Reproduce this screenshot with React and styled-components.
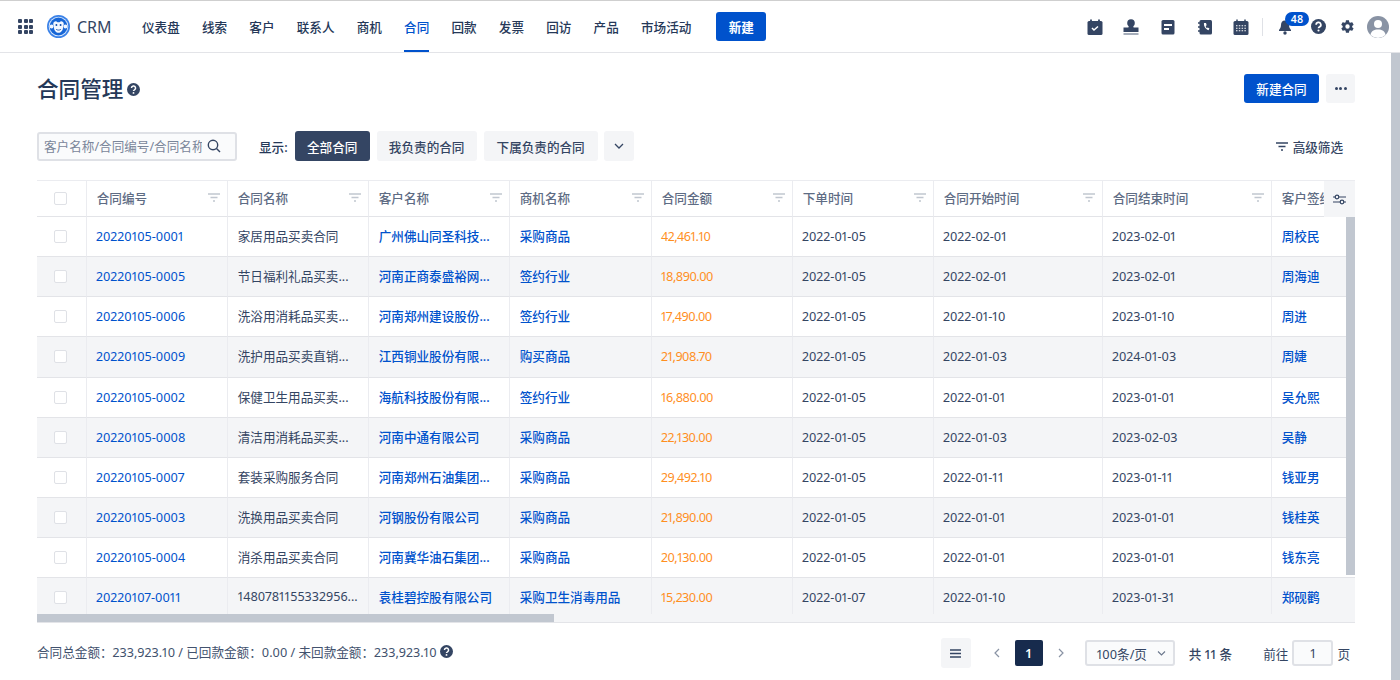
import React from 'react';
import styled, { createGlobalStyle } from 'styled-components';

const FONT = '"Noto Sans", "Noto Sans CJK SC", sans-serif';

const Global = createGlobalStyle`
  html, body { margin: 0; padding: 0; height: 100%; background: #fff; overflow: hidden; }
  body { font-family: ${FONT}; color: #172b4d; font-variant-numeric: proportional-nums; font-feature-settings: "pnum" 1; }
  button { font-feature-settings: "pnum" 1; }
  * { box-sizing: border-box; }
`;

const Shell = styled.div`height: 680px; width: 1400px; display: flex; flex-direction: column; border-top: 1px solid #cfcfcf;`;
const TopBar = styled.header`height: 52px; flex: none; display: flex; align-items: center; padding-left: 18px; padding-right: 11px; border-bottom: 1px solid #e3e4e8; background: #fff;`;
const Apps = styled.div`display: grid; grid-template-columns: repeat(3, 4px); gap: 1.5px; width: 16px; margin-right: 13px;
  i { width: 4px; height: 4px; background: #344563; border-radius: 1px; display: block; }`;
const Brand = styled.div`display: flex; align-items: center; gap: 7px; font-size: 16px; color: #344563; width: 95px;`;
const Nav = styled.nav`display: flex; align-items: stretch; height: 51px; gap: 22.2px;`;
const NavItem = styled.a`display: flex; align-items: center; font-size: 12.6px; font-weight: 500; color: ${p => p.$active ? '#0052cc' : '#253858'}; border-bottom: 2px solid ${p => p.$active ? '#0052cc' : 'transparent'}; padding-top: 2px;`;
const NewBtn = styled.button`border: 0; background: #0052cc; color: #fff; border-radius: 3px; font: 600 12.6px ${FONT}; height: 29px; width: 50px; margin-left: 25px; align-self: center; padding: 0;`;
const Tools = styled.div`margin-left: auto; display: flex; align-items: center;`;
const ToolIcon = styled.span`display: flex; width: 16px; height: 18px; align-items: center; justify-content: center; margin-right: ${p => p.$gap ?? 20}px; position: relative;`;
const Sep = styled.span`width: 1.500px; height: 18px; background: #dfe1e6; margin-right: 14px;`;
const Badge = styled.span`position: absolute; left: 8px; top: -6px; background: #0052cc; color: #fff; font-size: 10.500px; font-weight: 600; height: 14px; line-height: 14px; border-radius: 8px; width: 24px; text-align: center;`;

const Body = styled.div`flex: 1; display: flex; min-height: 0;`;
const Main = styled.main`flex: 1; padding: 20px 36px 0 37px; min-width: 0;`;
const PageScroll = styled.div`width: 9px; background: #c1c7d0;`;
const TitleRow = styled.div`display: flex; align-items: center; height: 32px;`;
const Title = styled.h1`margin: 0; font-size: 21.600px; font-weight: 500; color: #253858; margin-right: 4px; line-height: 32px;`;
const Right = styled.div`margin-left: auto; display: flex; gap: 7px; align-items: center; margin-top: -1px;`;
const Primary = styled.button`border: 0; width: 75px; height: 29px; background: #0052cc; color: #fff; border-radius: 3px; font: 500 12.6px ${FONT}; padding: 0;`;
const More = styled.button`border: 0; width: 29px; height: 29px; background: #f4f5f7; border-radius: 3px; display: flex; align-items: center; justify-content: center; gap: 1.500px; padding: 0;
  i { width: 3px; height: 3px; border-radius: 50%; background: #344563; display: block; }`;

const FilterRow = styled.div`display: flex; align-items: center; height: 30px; margin-top: 26px;`;
const Search = styled.div`width: 200px; height: 29px; background: #fafbfc; border: 2px solid #dfe1e6; border-radius: 3px; display: flex; align-items: center; padding: 0 14px 0 5px; margin-right: 22px; justify-content: space-between;`;
const SearchText = styled.span`font-size: 12.6px; color: #7a869a; width: 158px; overflow: hidden; white-space: nowrap; margin-bottom: 2px;`;
const ShowLabel = styled.span`font-size: 12.6px; font-weight: 500; color: #253858; margin-right: 7px;`;
const Seg = styled.button`border: 0; height: 30px; width: ${p => p.$w}px; margin-right: ${p => p.$mr ?? 7}px; border-radius: 3px; background: ${p => p.$on ? '#344563' : '#f4f5f7'}; color: ${p => p.$on ? '#fff' : '#344563'}; font: 500 12.6px ${FONT}; padding: 0; display: flex; align-items: center; justify-content: center;`;
const Advanced = styled.div`margin-left: auto; display: flex; align-items: center; gap: 5px; font-size: 12.6px; font-weight: 500; color: #344563; margin-right: 12px;`;

const TableWrap = styled.div`position: relative; margin-top: 19px; height: 443px; overflow: hidden; border-top: 1px solid #ebecf0; border-bottom: 1px solid #e3e4e8;`;
const Grid = styled.div`display: grid; grid-template-columns: 50px 141px 141px 141px 142px 141px 141px 169px 169px 120px; grid-template-rows: 36px repeat(10, 40.15px);`;
const Row = styled.div`display: contents;`;
const Cell = styled.div`
  border-right: 1.500px solid #ebecf0; border-bottom: 1.200px solid #e3e4e8;
  background: ${p => p.$alt ? '#f4f5f7' : '#fff'};
  display: flex; align-items: center; padding-left: ${p => p.$lift ? 9.7 : 9}px; padding-bottom: ${p => p.$lift ? 2 : 0}px; font-size: 12.6px; white-space: nowrap; overflow: hidden;
  letter-spacing: ${p => p.$tone === 'money' ? '-0.5px' : 'normal'};
  color: ${p => p.$tone === 'link' || p.$tone === 'num' ? '#0052cc' : p.$tone === 'money' ? '#ff8f1f' : '#344563'};
  font-weight: ${p => p.$tone === 'link' ? 500 : 400};
`;
const Head = styled.div`border-right: 1.500px solid #ebecf0; border-bottom: 1.500px solid #e3e4e8; background: #fff; display: flex; align-items: center; justify-content: space-between; padding: 0 7px 2px 9.7px; font-size: 12.6px; color: #5e6c84; font-weight: 500; white-space: nowrap; overflow: hidden;`;
const CheckCell = styled(Cell)`justify-content: center; padding: 0 3px 0 0;`;
const CheckHead = styled(Head)`justify-content: center; padding: 0 3px 0 0;`;
const Check = styled.span`width: 13px; height: 13px; border: 1.500px solid #dfe1e6; border-radius: 2px; background: #fff; display: block;`;
const SettingsBtn = styled.div`position: absolute; right: 0; top: 0; width: 31px; height: 36px; background: #f4f5f7; display: flex; align-items: center; justify-content: center;`;
const VBar = styled.div`position: absolute; right: 0; top: 36px; width: 9px; height: 358px; background: #c1c7d0;`;
const HBar = styled.div`position: absolute; left: 0; bottom: 0; width: 100%; height: 8px; background: #f4f5f7;`;
const HThumb = styled.div`width: 517px; height: 8px; background: #c1c7d0;`;

const Footer = styled.div`display: flex; align-items: center; height: 30px; margin-top: 15px;`;
const Sum = styled.div`font-size: 12.6px; color: #42526e; display: flex; align-items: center; gap: 3px; margin-bottom: 3px;`;
const Pager = styled.div`margin-left: auto; display: flex; align-items: center; font-size: 12.6px; color: #344563; padding-right: 5px;`;
const ListBtn = styled.div`width: 30px; height: 30px; background: #f4f5f7; border-radius: 3px; display: flex; align-items: center; justify-content: center; margin-right: 19px;`;
const Arrow = styled.span`display: flex; width: 14px; justify-content: center; margin-right: ${p => p.$mr}px;`;
const PageNum = styled.span`width: 28px; height: 26px; background: #172b4d; color: #fff; font-weight: 600; display: flex; align-items: center; justify-content: center; border-radius: 2px; margin-right: 11px;`;
const PerPage = styled.div`width: 90px; height: 26px; background: #fafbfc; border: 2px solid #dfe1e6; border-radius: 3px; display: flex; align-items: center; justify-content: space-between; padding: 0 7px 0 10px; margin-right: 14px;`;
const Total = styled.span`margin-right: 31px; font-weight: 500;`;
const Jump = styled.div`width: 41px; height: 26px; background: #fafbfc; border: 2px solid #dfe1e6; border-radius: 3px; display: flex; align-items: center; justify-content: center; margin: 0 4px;`;

const Ico = ({ children, w = 16, h = 16 }) => <svg width={w} height={h} viewBox={`0 0 ${w} ${h}`} fill="none">{children}</svg>;
const Help = ({ s = 14 }) => (
  <svg width={s} height={s} viewBox="0 0 14 14"><circle cx="7" cy="7" r="7" fill="#344563" />
    <path d="M4.800 5.400a2.200 2.200 0 1 1 3.300 1.900c-.7.4-1.100.7-1.100 1.400" stroke="#fff" strokeWidth="1.600" fill="none" /><circle cx="7" cy="10.700" r="1" fill="#fff" /></svg>
);
const FilterIco = ({ c = '#c1c7d0' }) => (
  <Ico w={12} h={9}><path d="M0 1h12M2.500 4.500h7M5 8h2" stroke={c} strokeWidth="1.400" /></Ico>
);

const Logo = () => (
  <svg width="23" height="23" viewBox="0 0 24 24">
    <circle cx="12" cy="12" r="12" fill="#3b82e8" />
    <circle cx="12" cy="12" r="10.200" fill="#dbe9fb" />
    <circle cx="12" cy="12" r="9.300" fill="#1766d6" />
    <circle cx="4.800" cy="12" r="2" fill="#f2f7ff" /><circle cx="19.200" cy="12" r="2" fill="#f2f7ff" />
    <path d="M6.500 9.500C6.500 7 9 6 10.200 7c.9.700 2.700.7 3.600 0C15 6 17.500 7 17.500 9.500c0 1.500-.8 2.300-.8 3.700 0 2.900-2.300 5.300-4.700 5.300s-4.700-2.400-4.700-5.300c0-1.400-.8-2.200-.8-3.700z" fill="#f2f7ff" />
    <circle cx="9.800" cy="10.500" r="1" fill="#0f4aa8" /><circle cx="14.200" cy="10.500" r="1" fill="#0f4aa8" />
    <path d="M9.600 15c1.400 1 3.400 1 4.800 0" stroke="#0f4aa8" strokeWidth=".9" fill="none" />
  </svg>
);

const C = '#344563';
const navItems = ['仪表盘', '线索', '客户', '联系人', '商机', '合同', '回款', '发票', '回访', '产品', '市场活动'];
const headers = ['合同编号', '合同名称', '客户名称', '商机名称', '合同金额', '下单时间', '合同开始时间', '合同结束时间'];
const rows = [
  ['20220105-0001', '家居用品买卖合同', '广州佛山同圣科技...', '采购商品', '42,461.10', '2022-01-05', '2022-02-01', '2023-02-01', '周校民'],
  ['20220105-0005', '节日福利礼品买卖...', '河南正商泰盛裕网...', '签约行业', '18,890.00', '2022-01-05', '2022-02-01', '2023-02-01', '周海迪'],
  ['20220105-0006', '洗浴用消耗品买卖...', '河南郑州建设股份...', '签约行业', '17,490.00', '2022-01-05', '2022-01-10', '2023-01-10', '周进'],
  ['20220105-0009', '洗护用品买卖直销...', '江西铜业股份有限...', '购买商品', '21,908.70', '2022-01-05', '2022-01-03', '2024-01-03', '周婕'],
  ['20220105-0002', '保健卫生用品买卖...', '海航科技股份有限...', '签约行业', '16,880.00', '2022-01-05', '2022-01-01', '2023-01-01', '吴允熙'],
  ['20220105-0008', '清洁用消耗品买卖...', '河南中通有限公司', '采购商品', '22,130.00', '2022-01-05', '2022-01-03', '2023-02-03', '吴静'],
  ['20220105-0007', '套装采购服务合同', '河南郑州石油集团...', '采购商品', '29,492.10', '2022-01-05', '2022-01-11', '2023-01-11', '钱亚男'],
  ['20220105-0003', '洗换用品买卖合同', '河钢股份有限公司', '采购商品', '21,890.00', '2022-01-05', '2022-01-01', '2023-01-01', '钱桂英'],
  ['20220105-0004', '消杀用品买卖合同', '河南冀华油石集团...', '采购商品', '20,130.00', '2022-01-05', '2022-01-01', '2023-01-01', '钱东亮'],
  ['20220107-0011', '1480781155332956...', '袁桂碧控股有限公司', '采购卫生消毒用品', '15,230.00', '2022-01-07', '2022-01-10', '2023-01-31', '郑砚鹳'],
];
const tones = ['num', '', 'link', 'link', 'money', '', '', '', 'link'];
const lifted = [false, true, true, true, false, false, false, false, true];

export default function App() {
  return (
    <Shell>
      <Global />
      <TopBar>
        <Apps>{Array.from({ length: 9 }).map((_, i) => <i key={i} />)}</Apps>
        <Brand><Logo />CRM</Brand>
        <Nav>{navItems.map(n => <NavItem key={n} $active={n === '合同'}>{n}</NavItem>)}</Nav>
        <NewBtn>新建</NewBtn>
        <Tools>
          <ToolIcon $gap={20}><Ico><rect x="0.500" y="2" width="15" height="14" rx="1.500" fill={C} /><path d="M4 0.500v3M12 0.500v3" stroke={C} strokeWidth="1.800" /><path d="M5 9l2 2 4-3.500" stroke="#fff" strokeWidth="1.500" /></Ico></ToolIcon>
          <ToolIcon $gap={21}><Ico><circle cx="8" cy="4" r="3.800" fill={C} /><path d="M6 6h4l.6 2.500h4.900V13H.5V8.500h4.900z" fill={C} /><rect x="0.500" y="14" width="15" height="2" fill="#a5adba" /></Ico></ToolIcon>
          <ToolIcon $gap={20.5}><Ico w={14}><rect x="0.500" y="1" width="13" height="14.500" rx="1.500" fill={C} /><path d="M3 6h8M3 10h5" stroke="#fff" strokeWidth="1.800" /></Ico></ToolIcon>
          <ToolIcon $gap={20.5}><Ico w={14}><rect x="1.500" y="1" width="12.500" height="14.500" rx="1.500" fill={C} /><path d="M0 4h3M0 8h3M0 12h3" stroke={C} strokeWidth="1.300" /><path d="M6 4c-.5 3 1.500 6 4.500 7.200l1-1.800-1.800-1-.8.8c-.7-.6-1.100-1.400-1.200-2.300l1-.6-.7-2.300z" fill="#fff" /></Ico></ToolIcon>
          <ToolIcon $gap={12.5}><Ico><rect x="0.500" y="2" width="15" height="14" rx="1.500" fill={C} /><path d="M4 0.500v3M12 0.500v3" stroke={C} strokeWidth="1.500" /><path d="M3 6.800h10M3 9.300h10M3 11.800h10" stroke="#fff" strokeWidth="1.100" strokeDasharray="1.500 1.300" /></Ico></ToolIcon>
          <Sep />
          <ToolIcon $gap={17}><Ico w={14}><path d="M7 1.500c-2.700 0-4 2-4 4.500 0 3-1.500 4-2 5v1h12v-1c-.5-1-2-2-2-5 0-2.500-1.300-4.500-4-4.500z" fill={C} /><circle cx="7" cy="14" r="1.700" fill={C} /></Ico><Badge>48</Badge></ToolIcon>
          <ToolIcon $gap={13}><Help s={15} /></ToolIcon>
          <ToolIcon $gap={12}><svg width="15" height="15" viewBox="0 0 24 24"><path fill={C} d="M19.400 13c.1-.3.100-.7.100-1s0-.7-.1-1l2.100-1.600c.2-.2.300-.4.100-.7l-2-3.400c-.1-.2-.4-.3-.6-.2l-2.500 1c-.5-.4-1.100-.7-1.700-1l-.4-2.700c0-.2-.2-.4-.5-.4h-4c-.3 0-.5.200-.5.400L9 5.100c-.6.300-1.200.6-1.700 1l-2.500-1c-.2-.1-.5 0-.6.200l-2 3.400c-.2.300-.1.500.1.700L4.400 11c-.1.300-.1.700-.1 1s0 .7.100 1l-2.100 1.600c-.2.200-.3.400-.1.700l2 3.400c.1.200.4.300.6.200l2.500-1c.5.400 1.100.7 1.700 1l.4 2.700c0 .2.200.4.500.4h4c.3 0 .5-.2.500-.4l.4-2.700c.6-.3 1.200-.6 1.700-1l2.500 1c.2.100.5 0 .6-.2l2-3.400c.2-.3.100-.5-.1-.7zM12 15.500a3.500 3.500 0 1 1 0-7 3.500 3.500 0 0 1 0 7z" /></svg></ToolIcon>
          <svg width="22" height="22" viewBox="0 0 22 22"><circle cx="11" cy="11" r="11" fill="#8993a4" /><circle cx="11" cy="8" r="4" fill="#fff" /><path d="M3.500 19c.5-4 3.500-5.500 7.500-5.500s7 1.500 7.500 5.500A11 11 0 0 1 3.500 19z" fill="#fff" /></svg>
        </Tools>
      </TopBar>
      <Body>
        <Main>
          <TitleRow>
            <Title>合同管理</Title>
            <Help s={13} />
            <Right>
              <Primary>新建合同</Primary>
              <More><i /><i /><i /></More>
            </Right>
          </TitleRow>
          <FilterRow>
            <Search>
              <SearchText>客户名称/合同编号/合同名称</SearchText>
              <Ico w={14} h={14}><circle cx="6" cy="6" r="4.700" stroke={C} strokeWidth="1.400" /><path d="M9.500 9.500L13 13" stroke={C} strokeWidth="1.400" /></Ico>
            </Search>
            <ShowLabel>显示:</ShowLabel>
            <Seg $on $w={75}>全部合同</Seg>
            <Seg $w={100}>我负责的合同</Seg>
            <Seg $w={114} $mr={6}>下属负责的合同</Seg>
            <Seg $w={30}><Ico w={10} h={6}><path d="M1 1l4 4 4-4" stroke={C} strokeWidth="1.300" /></Ico></Seg>
            <Advanced><FilterIco c={C} />高级筛选</Advanced>
          </FilterRow>
          <TableWrap>
            <Grid>
              <CheckHead><Check /></CheckHead>
              {headers.map(h => <Head key={h}>{h}<FilterIco /></Head>)}
              <Head>客户签约</Head>
              {rows.map((r, i) => (
                <Row key={r[0]}>
                  <CheckCell $alt={i % 2 === 1}><Check /></CheckCell>
                  {r.map((v, j) => <Cell key={j} $alt={i % 2 === 1} $tone={tones[j]} $lift={lifted[j]}>{v}</Cell>)}
                </Row>
              ))}
            </Grid>
            <SettingsBtn><Ico w={13} h={11}><path d="M0 3h13M0 8h13" stroke={C} strokeWidth="1.200" /><circle cx="4" cy="3" r="1.800" fill="#f4f5f7" stroke={C} strokeWidth="1.200" /><circle cx="9" cy="8" r="1.800" fill="#f4f5f7" stroke={C} strokeWidth="1.200" /></Ico></SettingsBtn>
            <VBar />
            <HBar><HThumb /></HBar>
          </TableWrap>
          <Footer>
            <Sum>合同总金额：233,923.10 / 已回款金额：0.00 / 未回款金额：233,923.10 <Help s={13} /></Sum>
            <Pager>
              <ListBtn><Ico w={11} h={9}><path d="M0 1h11M0 4.500h11M0 8h11" stroke={C} strokeWidth="1.600" /></Ico></ListBtn>
              <Arrow $mr={11}><Ico w={6} h={10}><path d="M5 1L1 5l4 4" stroke="#8993a4" strokeWidth="1.200" /></Ico></Arrow>
              <PageNum>1</PageNum>
              <Arrow $mr={17}><Ico w={6} h={10}><path d="M1 1l4 4-4 4" stroke="#8993a4" strokeWidth="1.200" /></Ico></Arrow>
              <PerPage>100条/页<Ico w={9} h={5}><path d="M1 .5l3.500 3.500L8 .5" stroke="#6b778c" strokeWidth="1.100" /></Ico></PerPage>
              <Total>共 11 条</Total>
              前往<Jump>1</Jump>页
            </Pager>
          </Footer>
        </Main>
        <PageScroll />
      </Body>
    </Shell>
  );
}
